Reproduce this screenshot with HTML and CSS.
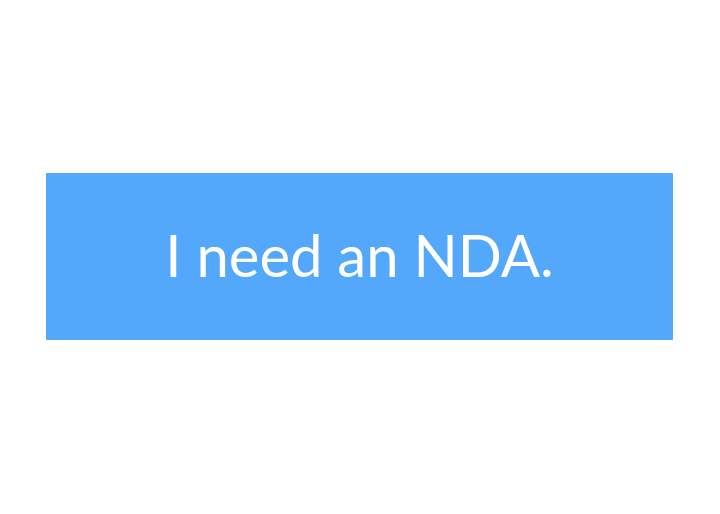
FILE: index.html
```html
<!DOCTYPE html>
<html>
<head>
<meta charset="utf-8">
<link rel="stylesheet" href="styles.css">
</head>
<body>
<div class="page">
  <button class="cta">I need an NDA.</button>
</div>
</body>
</html>
```
FILE: styles.css
```css
html, body {
  margin: 0;
  padding: 0;
  background: #ffffff;
}
.page {
  width: 720px;
  height: 514px;
  padding: 173px 0 0 46px;
  box-sizing: border-box;
}
.cta {
  display: flex;
  align-items: center;
  justify-content: center;
  width: 627px;
  height: 167px;
  margin: 0;
  padding: 0 0 4px 0;
  border: none;
  border-radius: 1px;
  background: #53a8fb;
  color: #ffffff;
  font-family: Lato, "Open Sans", sans-serif;
  font-size: 58px;
  font-weight: 400;
  box-sizing: border-box;
}
```
